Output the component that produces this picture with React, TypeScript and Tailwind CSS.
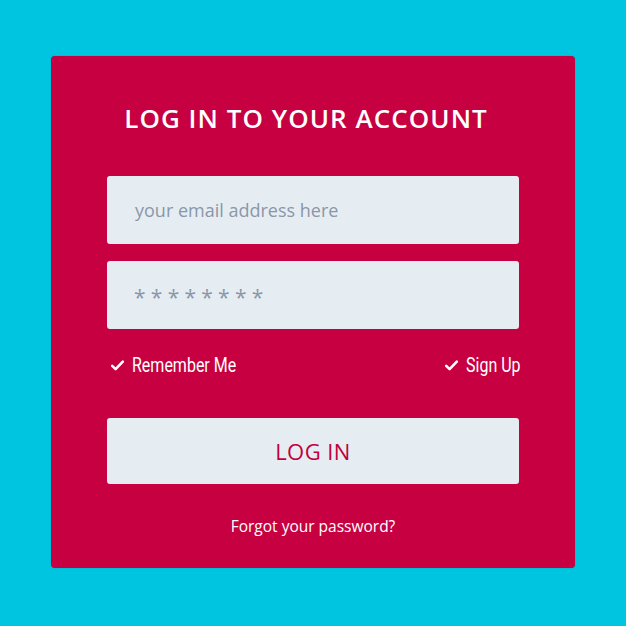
import React from 'react';

const CheckIcon = () => (
  <svg width="13" height="11" viewBox="0 0 13 11" className="shrink-0">
    <path d="M1.2 5.8 L4.6 9.2 L11.8 1.6" fill="none" stroke="#ffffff" strokeWidth="2.6" strokeLinecap="round" strokeLinejoin="round" />
  </svg>
);

export default function App() {
  return (
    <div className="min-h-[626px] w-[626px] bg-[#00C5E1] pt-[56px] pl-[51px]" style={{ fontFamily: '"Open Sans", "Noto Sans", sans-serif' }}>
      <div className="w-[524px] h-[512px] bg-[#C70041] rounded-[4px] px-[56px] flex flex-col shadow-[0_0_1px_rgba(0,0,0,0.4)]">
        {/* Title */}
        <h1 className="shrink-0 pt-[44px] pr-[14px] text-center text-white font-semibold text-[26px] leading-[36px] tracking-[0.04em]">
          LOG IN TO YOUR ACCOUNT
        </h1>

        {/* Fields */}
        <div className="shrink-0 mt-[40px] flex flex-col gap-[17px]">
          <div className="h-[68px] bg-[#E6EDF2] rounded-[3px] flex items-center pl-[28px] text-[18px] text-[#8A97A8]">
            your email address here
          </div>
          <div className="h-[68px] bg-[#E6EDF2] rounded-[3px] flex items-center pl-[27px] pt-[6px] text-[21px] text-[#8A97A8] tracking-[0.25em]">
            ********
          </div>
        </div>

        {/* Options */}
        <div className="shrink-0 mt-[21px] h-[30px] flex items-center justify-between pl-[4px] text-white text-[20px]" style={{ fontFamily: 'Roboto, "Noto Sans", sans-serif' }}>
          <div className="flex items-center gap-[8px]">
            <CheckIcon />
            <span className="inline-block scale-x-[0.8] origin-left">Remember Me</span>
          </div>
          <div className="flex items-center gap-[8px]">
            <CheckIcon />
            <span className="inline-block w-[53px] whitespace-nowrap">
              <span className="inline-block scale-x-[0.8] origin-left">Sign Up</span>
            </span>
          </div>
        </div>

        {/* Button */}
        <button className="shrink-0 mt-[38px] h-[66px] w-full bg-[#E6EDF2] rounded-[3px] text-[#C2003D] text-[22px] tracking-[0.02em]">
          LOG IN
        </button>

        {/* Forgot */}
        <div className="shrink-0 mt-[32px] text-center text-white text-[15.5px] leading-[20px]">Forgot your password?</div>
      </div>
    </div>
  );
}
